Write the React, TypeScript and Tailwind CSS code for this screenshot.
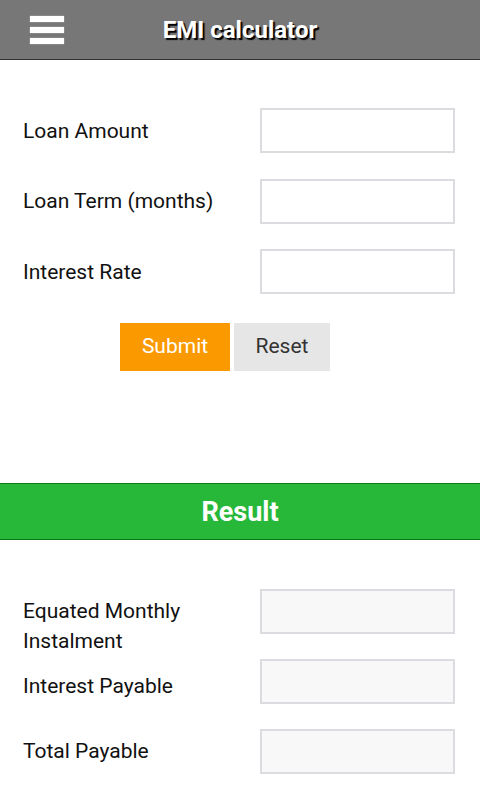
import React from "react";

const font = "font-['Roboto','Liberation_Sans',sans-serif]";

function Field({ label }: { label: string }) {
  return (
    <div className="flex items-center">
      <span className="w-[237px] text-[21px] leading-[30px] text-[#111]">{label}</span>
      <input type="text" className="h-[45px] w-[195px] border-2 border-[#dcdce0] bg-white outline-none" />
    </div>
  );
}

export default function App() {
  return (
    <div className={`${font} min-h-[800px] w-[480px] bg-white`}>
      <header className="relative flex h-[60px] items-center justify-center border-b border-[#333] bg-[#777]">
        <button className="absolute left-[30px] top-[16px] flex w-[34px] flex-col gap-[5px]" aria-label="menu">
          <span className="h-[6px] bg-white shadow-[0_0_1px_#ddd]" />
          <span className="h-[6px] bg-white shadow-[0_0_1px_#ddd]" />
          <span className="h-[6px] bg-white shadow-[0_0_1px_#ddd]" />
        </button>
        <h1 className="text-[24px] font-bold text-white [text-shadow:2px_2px_1px_#000]">EMI calculator</h1>
      </header>

      <form className="flex flex-col pl-[23px] pt-[48px]">
        <div className="flex flex-col gap-[25.5px]">
          <Field label="Loan Amount" />
          <Field label="Loan Term (months)" />
          <Field label="Interest Rate" />
        </div>
        <div className="ml-[97px] mt-[29px] flex gap-[4px]">
          <button type="button" className="h-[48px] w-[110px] bg-[#fb9900] text-[21px] text-white">
            Submit
          </button>
          <button type="button" className="h-[48px] w-[96px] bg-[#e6e6e6] text-[21px] text-[#333]">
            Reset
          </button>
        </div>
      </form>

      <div className="mt-[112px] flex h-[57px] items-center justify-center border-y border-[#0c7a14] bg-[#27b83a]">
        <h2 className="pt-[2px] text-[27px] font-bold text-white">Result</h2>
      </div>

      <div className="flex flex-col pl-[23px] pt-[49px]">
        <div className="flex h-[70px] items-start">
          <span className="w-[237px] pt-[7px] text-[21px] leading-[30px] text-[#111]">
            Equated Monthly
            <br />
            Instalment
          </span>
          <input readOnly className="h-[45px] w-[195px] border-2 border-[#dcdce0] bg-[#f8f8f8] outline-none" />
        </div>
        <div className="flex h-[70px] items-start">
          <span className="w-[237px] pt-[12px] text-[21px] leading-[30px] text-[#111]">Interest Payable</span>
          <input readOnly className="h-[45px] w-[195px] border-2 border-[#dcdce0] bg-[#f8f8f8] outline-none" />
        </div>
        <div className="flex h-[70px] items-start">
          <span className="w-[237px] pt-[7px] text-[21px] leading-[30px] text-[#111]">Total Payable</span>
          <input readOnly className="h-[45px] w-[195px] border-2 border-[#dcdce0] bg-[#f8f8f8] outline-none" />
        </div>
      </div>
    </div>
  );
}
